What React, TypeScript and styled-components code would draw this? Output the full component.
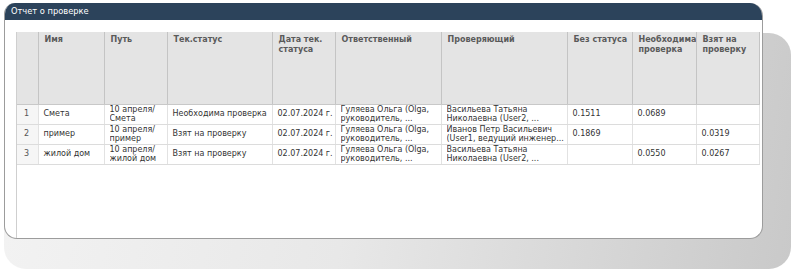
import React from "react";
import styled, { createGlobalStyle } from "styled-components";

const Global = createGlobalStyle`
  html, body { margin: 0; padding: 0; background: #ffffff; }
  body { font-family: "DejaVu Sans", Verdana, sans-serif; }
`;

const Stage = styled.div`
  width: 793px;
  height: 270px;
  box-sizing: border-box;
  padding: 3px 30px 31px 4px;
  background: #ffffff;
`;

const PanelWrap = styled.div`
  position: relative;
  height: 100%;
  &::before {
    content: "";
    position: absolute;
    left: 0;
    top: 30px;
    right: -28px;
    bottom: -30px;
    border-radius: 22px;
    background: linear-gradient(100deg, #f3f3f3 0%, #e8e8e8 45%, #c9c9c9 100%);
    z-index: 0;
  }
`;

const Panel = styled.div`
  position: relative;
  z-index: 1;
  height: 100%;
  box-sizing: border-box;
  display: flex;
  flex-direction: column;
  background: #ffffff;
  border: 1px solid #9c9c9c;
  border-top: none;
  border-radius: 11px 13px 13px 13px;
  overflow: hidden;
`;

const Header = styled.div`
  height: 17px;
  flex: none;
  background: #2c435b;
  color: #ffffff;
  font-size: 8.3px;
  line-height: 17px;
  padding-left: 7px;
  margin: 0 -1px;
`;

const Body = styled.div`
  flex: 1;
  display: flex;
  padding: 12px 0 0 11px;
  min-height: 0;
`;

const GridArea = styled.div`
  flex: 1;
  border-left: 1px solid #cfcfcf;
  overflow: hidden;
`;

const Table = styled.table`
  border-collapse: collapse;
  table-layout: fixed;
  width: 742px;
  font-size: 8px;
  color: #333333;
`;

const HeadCell = styled.th`
  background: #e4e4e4;
  border-right: 1px solid #c4c4c4;
  border-bottom: 1px solid #c8c8c8;
  height: 72px;
  vertical-align: top;
  text-align: left;
  padding: 3px 1px 0 6px;
  font-weight: bold;
  color: #5a5a5a;
  line-height: 10px;
  box-sizing: border-box;
  overflow: hidden;
  white-space: normal;
`;

const Row = styled.tr`
  height: 19px;
`;

const Cell = styled.td<{ $num?: boolean }>`
  border-right: 1px solid #e2e2e2;
  border-bottom: 1px solid #dcdcdc;
  padding: 0 1px 0 ${(p) => (p.$num ? "7px" : "5px")};
  line-height: 9.5px;
  vertical-align: middle;
  overflow: hidden;
  white-space: nowrap;
  background: ${(p) => (p.$num ? "#f6f6f6" : "#ffffff")};
  color: ${(p) => (p.$num ? "#555555" : "#333333")};
`;

const Line = styled.div`
  white-space: nowrap;
  overflow: hidden;
`;

const cols = [21, 66, 63, 105, 63, 106, 126, 65, 64, 63];
const heads = [
  "",
  "Имя",
  "Путь",
  "Тек.статус",
  "Дата тек. статуса",
  "Ответственный",
  "Проверяющий",
  "Без статуса",
  "Необходима проверка",
  "Взят на проверку",
];

type R = {
  n: string;
  name: string;
  path: [string, string];
  status: string;
  date: string;
  resp: [string, string];
  check: [string, string];
  a: string;
  b: string;
  c: string;
};

const rows: R[] = [
  {
    n: "1",
    name: "Смета",
    path: ["10 апреля/", "Смета"],
    status: "Необходима проверка",
    date: "02.07.2024 г.",
    resp: ["Гуляева Ольга (Olga,", "руководитель, ..."],
    check: ["Васильева Татьяна", "Николаевна (User2, ..."],
    a: "0.1511",
    b: "0.0689",
    c: "",
  },
  {
    n: "2",
    name: "пример",
    path: ["10 апреля/", "пример"],
    status: "Взят на проверку",
    date: "02.07.2024 г.",
    resp: ["Гуляева Ольга (Olga,", "руководитель, ..."],
    check: ["Иванов Петр Васильевич", "(User1, ведущий инженер..."],
    a: "0.1869",
    b: "",
    c: "0.0319",
  },
  {
    n: "3",
    name: "жилой дом",
    path: ["10 апреля/", "жилой дом"],
    status: "Взят на проверку",
    date: "02.07.2024 г.",
    resp: ["Гуляева Ольга (Olga,", "руководитель, ..."],
    check: ["Васильева Татьяна", "Николаевна (User2, ..."],
    a: "",
    b: "0.0550",
    c: "0.0267",
  },
];

const Lines = ({ l }: { l: [string, string] }) => (
  <>
    <Line>{l[0]}</Line>
    <Line>{l[1]}</Line>
  </>
);

export default function App() {
  return (
    <>
      <Global />
      <Stage>
        <PanelWrap>
          <Panel>
            <Header>Отчет о проверке</Header>
            <Body>
              <GridArea>
                <Table>
                  <colgroup>
                    {cols.map((w, i) => (
                      <col key={i} style={{ width: w }} />
                    ))}
                  </colgroup>
                  <thead>
                    <tr>
                      {heads.map((h, i) => (
                        <HeadCell key={i}>{h}</HeadCell>
                      ))}
                    </tr>
                  </thead>
                  <tbody>
                    {rows.map((r) => (
                      <Row key={r.n}>
                        <Cell $num>{r.n}</Cell>
                        <Cell>{r.name}</Cell>
                        <Cell>
                          <Lines l={r.path} />
                        </Cell>
                        <Cell>{r.status}</Cell>
                        <Cell>{r.date}</Cell>
                        <Cell>
                          <Lines l={r.resp} />
                        </Cell>
                        <Cell>
                          <Lines l={r.check} />
                        </Cell>
                        <Cell>{r.a}</Cell>
                        <Cell>{r.b}</Cell>
                        <Cell>{r.c}</Cell>
                      </Row>
                    ))}
                  </tbody>
                </Table>
              </GridArea>
            </Body>
          </Panel>
        </PanelWrap>
      </Stage>
    </>
  );
}
